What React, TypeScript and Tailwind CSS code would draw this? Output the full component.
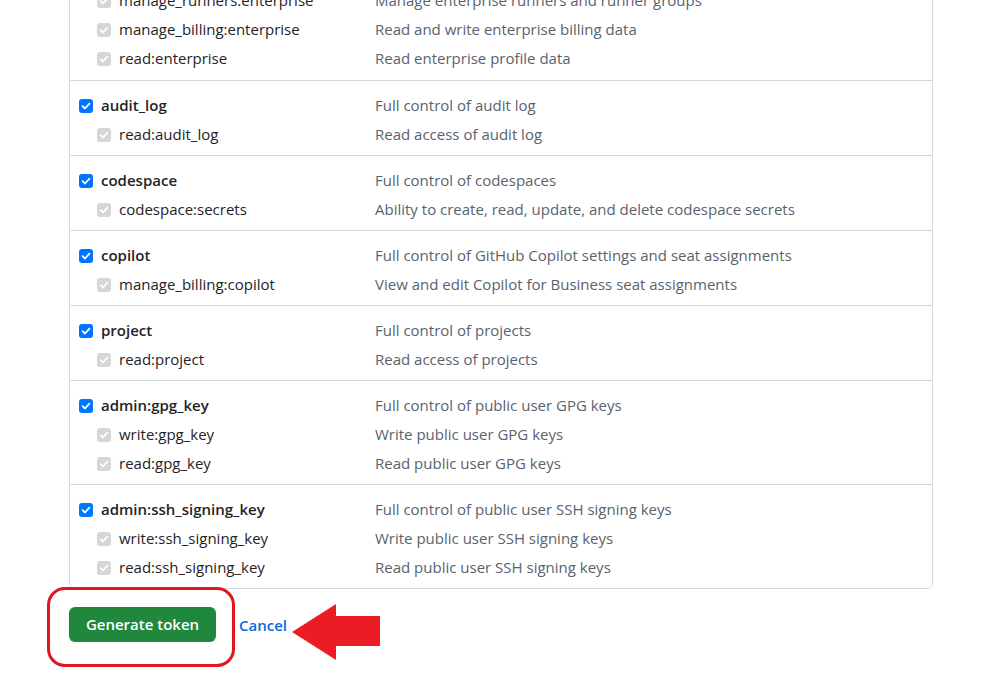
import React from "react";

type Scope = { name: string; desc: string; children?: { name: string; desc: string }[] };

const scopes: Scope[] = [
  {
    name: "admin:enterprise",
    desc: "Full control of enterprises",
    children: [
      { name: "manage_runners:enterprise", desc: "Manage enterprise runners and runner groups" },
      { name: "manage_billing:enterprise", desc: "Read and write enterprise billing data" },
      { name: "read:enterprise", desc: "Read enterprise profile data" },
    ],
  },
  {
    name: "audit_log",
    desc: "Full control of audit log",
    children: [{ name: "read:audit_log", desc: "Read access of audit log" }],
  },
  {
    name: "codespace",
    desc: "Full control of codespaces",
    children: [{ name: "codespace:secrets", desc: "Ability to create, read, update, and delete codespace secrets" }],
  },
  {
    name: "copilot",
    desc: "Full control of GitHub Copilot settings and seat assignments",
    children: [{ name: "manage_billing:copilot", desc: "View and edit Copilot for Business seat assignments" }],
  },
  {
    name: "project",
    desc: "Full control of projects",
    children: [{ name: "read:project", desc: "Read access of projects" }],
  },
  {
    name: "admin:gpg_key",
    desc: "Full control of public user GPG keys",
    children: [
      { name: "write:gpg_key", desc: "Write public user GPG keys" },
      { name: "read:gpg_key", desc: "Read public user GPG keys" },
    ],
  },
  {
    name: "admin:ssh_signing_key",
    desc: "Full control of public user SSH signing keys",
    children: [
      { name: "write:ssh_signing_key", desc: "Write public user SSH signing keys" },
      { name: "read:ssh_signing_key", desc: "Read public user SSH signing keys" },
    ],
  },
];

function Check({ disabled }: { disabled?: boolean }) {
  return (
    <span
      className={`w-[14px] h-[14px] rounded-[3px] flex items-center justify-center shrink-0 ${
        disabled ? "bg-[#d6d6d6]" : "bg-[#0075ff]"
      }`}
    >
      <svg width="10" height="10" viewBox="0 0 10 10" fill="none">
        <path d="M1.6 5.2 L4 7.5 L8.4 2.6" stroke="white" strokeWidth="1.8" strokeLinecap="round" strokeLinejoin="round" />
      </svg>
    </span>
  );
}

function Row({ name, desc, sub }: { name: string; desc: string; sub?: boolean }) {
  return (
    <div className="flex h-[29px] items-center">
      <div className={`w-[305px] flex items-center gap-[8px] ${sub ? "pl-[27px]" : "pl-[9px]"}`}>
        <Check disabled={sub} />
        <span className={sub ? "text-[#1f2328]" : "font-semibold text-[#1f2328]"}>{name}</span>
      </div>
      <div className="text-[#59636e]">{desc}</div>
    </div>
  );
}

export default function App() {
  return (
    <div
      className="min-h-screen bg-white overflow-hidden text-[15px] leading-[29px]"
      style={{ fontFamily: '"Open Sans", "Noto Sans", sans-serif' }}
    >
      <div className="pl-[69px] w-[933px]">
        {/* scope list card */}
        <div className="mt-[-54px] border border-[#d1d9e0] rounded-[6px]">
          {scopes.map((s, i) => (
            <div
              key={s.name}
              className={`pt-[10px] ${i > 0 ? "pb-[6px] border-t border-[#d1d9e0]" : "pb-[7px]"}`}
            >
              <Row name={s.name} desc={s.desc} />
              {s.children?.map((c) => (
                <Row key={c.name} name={c.name} desc={c.desc} sub />
              ))}
            </div>
          ))}
        </div>

        {/* actions */}
        <div className="relative mt-[18px] flex items-center gap-[23px]">
          <button className="h-[35px] w-[147px] rounded-[6px] bg-[#1f883d] text-white font-semibold text-[15px]">
            Generate token
          </button>
          <a className="text-[#0969da] font-semibold text-[15px] mt-[2px]">Cancel</a>

          <div className="absolute left-[-22px] top-[-20px] w-[188px] h-[80px] border-[3.5px] border-[#e3161f] rounded-[18px]" />
          <svg className="absolute left-[222px] top-[-4px]" width="90" height="58" viewBox="0 0 90 58">
            <polygon points="1,29 45,1 45,13 89,13 89,43 45,43 45,57" fill="#ec1c24" />
          </svg>
        </div>
      </div>
    </div>
  );
}
